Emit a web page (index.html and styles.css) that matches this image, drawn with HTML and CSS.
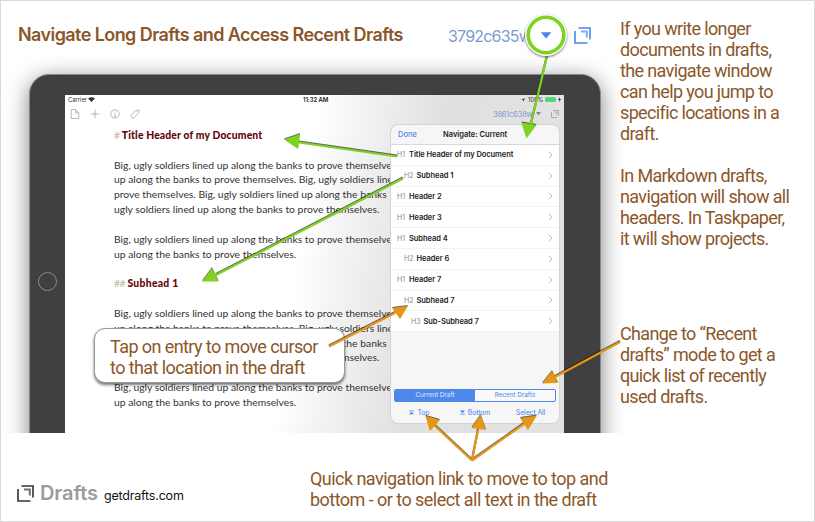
FILE: index.html
```html
<!DOCTYPE html>
<html lang="en">
<head>
<meta charset="utf-8">
<title>Navigate Long Drafts</title>
<link rel="stylesheet" href="styles.css">
</head>
<body>
<div class="poster">
  <main class="main">
    <header class="top">
      <h1 class="title">Navigate Long Drafts and Access Recent Drafts</h1>
      <div class="count">3792c635w</div>
      <svg class="ring" viewBox="0 0 42 42"><circle cx="21" cy="21" r="17.8" fill="none" stroke="#7ed321" stroke-width="3.6"/><path d="M15.700 18.300H26.500L21.100 24.500Z" fill="#4a86ee"/></svg>
      <svg class="logo logo-blue" viewBox="0 0 17 17"><path d="M4.500 1H16V12.500M1 4V16H13.500"/><path class="inner" d="M7 4.500H12.800V10.500"/></svg>
    </header>
    <div class="stage">
      <div class="tablet">
        <div class="bezel"><span class="home"></span></div>
        <div class="screen">
          <div class="status">
            <span class="carrier">Carrier</span>
            <svg class="wifi" viewBox="0 0 7 5"><path d="M0 1.600Q3.500-1.300 7 1.600L3.500 5Z" fill="#333"/></svg>
            <span class="clock">11:32 AM</span>
            <svg class="loc" viewBox="0 0 5 5"><path d="M5 0L2.800 5 2.500 2.600 0 2.200Z" fill="#444"/></svg>
            <span class="pct">100%</span>
            <span class="battery"></span>
            <svg class="bolt" viewBox="0 0 3 5"><path d="M2 0L0 3H1.400L1 5 3 2H1.600Z" fill="#222"/></svg>
          </div>
          <div class="tools">
            <svg class="tool" viewBox="0 0 10 10"><path d="M1.200.5H5.500L8.800 3.800V9.500H1.200ZM5.500.5V3.800H8.800"/></svg>
            <svg class="tool" viewBox="0 0 10 10"><path d="M5 .8V9.200M.8 5H9.200"/></svg>
            <svg class="tool" viewBox="0 0 10 10"><circle cx="5" cy="5" r="4.200"/><path d="M5 4.300V7.500M5 2.500V3.300M4.200 7.500H5.800"/></svg>
            <svg class="tool" viewBox="0 0 10 10"><path d="M1.100 6.200L5.800 1.300 8.800.9 8.900 3.700 4 8.800Q2.700 9.600 1.600 8.600 .5 7.400 1.100 6.200ZM6.700 2.800L7.300 2.200"/></svg>
            <span class="tool-count">3861c638w</span>
            <svg class="caret" viewBox="0 0 5 4"><path d="M0 0H5L2.500 3.500Z" fill="#888"/></svg>
            <svg class="logo logo-small" viewBox="0 0 17 17"><path d="M4.500 1H16V12.500M1 4V16H13.500M7 4.500H12.500V10"/></svg>
          </div>
          <article class="doc">
            <h2><i># </i><b class="h-title">Title Header of my Document</b></h2>
            <p>Big, ugly soldiers lined up along the banks to prove themselves<br>up along the banks to prove themselves. Big, ugly soldiers lined<br>prove themselves. Big, ugly soldiers lined up along the banks<br>ugly soldiers lined up along the banks to prove themselves.</p>
            <p>Big, ugly soldiers lined up along the banks to prove themselves<br>up along the banks to prove themselves.</p>
            <h2><i>## </i><b class="h-sub">Subhead 1</b></h2>
            <p>Big, ugly soldiers lined up along the banks to prove themselves<br>up along the banks to prove themselves. Big, ugly soldiers lined<br>prove themselves. Big, ugly soldiers lined up along the banks<br>ugly soldiers lined up along the banks to prove themselves.</p>
            <p>Big, ugly soldiers lined up along the banks to prove themselves<br>up along the banks to prove themselves.</p>
          </article>
          <section class="popover">
            <div class="pop-head"><span class="done">Done</span><b>Navigate: Current</b></div>
            <ul class="list">
              <li><i>H1</i><b>Title Header of my Document</b><svg class="chev" viewBox="0 0 5 8"><path d="M1 .8L4 4 1 7.200"/></svg></li>
              <li class="in1"><i>H2</i><b>Subhead 1</b><svg class="chev" viewBox="0 0 5 8"><path d="M1 .8L4 4 1 7.200"/></svg></li>
              <li><i>H1</i><b>Header 2</b><svg class="chev" viewBox="0 0 5 8"><path d="M1 .8L4 4 1 7.200"/></svg></li>
              <li><i>H1</i><b>Header 3</b><svg class="chev" viewBox="0 0 5 8"><path d="M1 .8L4 4 1 7.200"/></svg></li>
              <li><i>H1</i><b>Subhead 4</b><svg class="chev" viewBox="0 0 5 8"><path d="M1 .8L4 4 1 7.200"/></svg></li>
              <li class="in1"><i>H2</i><b>Header 6</b><svg class="chev" viewBox="0 0 5 8"><path d="M1 .8L4 4 1 7.200"/></svg></li>
              <li><i>H1</i><b>Header 7</b><svg class="chev" viewBox="0 0 5 8"><path d="M1 .8L4 4 1 7.200"/></svg></li>
              <li class="in1"><i>H2</i><b>Subhead 7</b><svg class="chev" viewBox="0 0 5 8"><path d="M1 .8L4 4 1 7.200"/></svg></li>
              <li class="in2"><i>H3</i><b>Sub-Subhead 7</b><svg class="chev" viewBox="0 0 5 8"><path d="M1 .8L4 4 1 7.200"/></svg></li>
            </ul>
            <div class="segment"><span class="on">Current Draft</span><span>Recent Drafts</span></div>
            <div class="jumps">
              <span><svg class="jump" viewBox="0 0 6 5"><path d="M0 0H6V1H0ZM3 1.500L6 4.600H0Z"/></svg>Top</span>
              <span><svg class="jump" viewBox="0 0 6 5"><path d="M0 4H6V5H0ZM0 0H6L3 3.300Z"/></svg>Bottom</span>
              <span>Select All</span>
            </div>
          </section>
        </div>
      </div>
    </div>
    <footer class="foot">
      <div class="brand">
        <svg class="logo logo-dark" viewBox="0 0 17 17"><path d="M4.500 1H16V12.500M1 4V16H13.500"/><path class="inner" d="M7 4.500H12.800V10.500"/></svg>
        <span class="name">Drafts</span><span class="site">getdrafts.com</span>
      </div>
      <p class="note quick">Quick navigation link to move to top and<br>bottom - or to select all text in the draft</p>
    </footer>
  </main>
  <aside class="side">
    <p class="note">If you write longer<br>documents in drafts,<br>the navigate window<br>can help you jump to<br>specific locations in a<br>draft.</p>
    <p class="note">In Markdown drafts,<br>navigation will show all<br>headers. In Taskpaper,<br>it will show projects.</p>
    <p class="note recent">Change to “Recent<br>drafts” mode to get a<br>quick list of recently<br>used drafts.</p>
  </aside>
  <div class="callout note">Tap on entry to move cursor<br>to that location in the draft</div>
  <svg class="arrows" viewBox="0 0 815 522">
    <g class="green">
      <path class="shaft" d="M547.500 54L531 124M397 156.500L299 142.500M403 178.500L216 275"/>
      <path d="M526.500 138.500L521.500 122.500L536.500 125ZM284 139.500L300 134L298 149ZM202 281.500L212 268L218.500 281.500Z"/>
    </g>
    <g class="orange">
      <path class="shaft" d="M329 346.500L395 313M620 342L555 377M472 460.500L435 426M472 460.500L478 430M472 460.500L524 424"/>
      <path d="M408 306L392 308L400 319ZM542 383.500L552 371L558 383ZM425.500 416L440 420L430 431ZM480.500 415L471.500 428L486 430ZM537 415.500L520 418L528 430Z"/>
    </g>
  </svg>
</div>
</body>
</html>
```
FILE: styles.css
```css
* { box-sizing: border-box; }
body { margin: 0; background: #fff; font-family: Inter, "Liberation Sans", sans-serif; }
h1, h2, p, ul { margin: 0; padding: 0; font-weight: 400; }
i { font-style: normal; }
svg { display: block; flex: none; overflow: visible; }

.poster { position: relative; width: 815px; height: 522px; overflow: hidden; display: flex; border: 1px solid #d9d9d9; }
.main { width: 619px; flex: none; display: flex; flex-direction: column; }
.top { position: relative; z-index: 1; flex: none; height: 68px; padding-left: 17px; display: flex; align-items: center; white-space: nowrap; }
.title { width: 430px; margin-top: -2px; font-size: 18px; font-weight: 600; letter-spacing: -.58px; color: #8b572a; }
.count { width: 77px; margin-top: 2px; font-size: 16px; letter-spacing: -.8px; color: #7e9bce; }
.ring { width: 42px; height: 42px; border-radius: 50%; background: #fff; filter: drop-shadow(0 1px 1px rgba(0,0,0,.55)); }
.logo { fill: none; stroke-width: 1.6; stroke: #4a86ee; }
.inner { stroke-width: 2; opacity: .7; }
.logo-blue { width: 17px; height: 17px; margin-left: 7px; }

.stage { width: 813px; height: 414px; margin-top: -50px; padding: 55px 0 0 28px; overflow: hidden; flex: none; }
.tablet { display: flex; width: 572px; height: 420px; padding: 20px 0 0; border-radius: 20px 20px 0 0; background: #404040; border: 1px solid #888; box-shadow: 0 5px 22px rgba(0,0,0,.5); }
.bezel { width: 35px; padding-top: 177px; flex: none; }
.home { display: block; width: 19px; height: 19px; margin-left: 8px; border: 1px solid #8b8b8b; border-radius: 50%; }
.screen { position: relative; width: 499px; flex: none; background: linear-gradient(98deg, #fff 46%, #f3f3f3 54%, #e0e0e0 69%, #e3e3e3 100%); }

.status { display: flex; align-items: center; height: 8px; padding: 1px 3px 0; font-size: 6px; color: #333; white-space: nowrap; }
.wifi { width: 7px; height: 5px; margin-left: 2px; }
.carrier { width: 18px; letter-spacing: -.1px; }
.clock { margin-left: 208px; width: 220px; font-weight: 600; letter-spacing: -.1px; color: #222; }
.loc { width: 4px; height: 4px; }
.pct { width: 14px; margin: 0 3px 0 3px; letter-spacing: -.2px; }
.battery { width: 11px; height: 5px; background: #4cd964; border: .5px solid #6c9; border-radius: 1px; }
.bolt { width: 3px; height: 5px; margin-left: 2px; }
.tools { display: flex; align-items: center; height: 22px; padding-left: 5px; gap: 10px; color: #7e9bce; font-size: 7.500px; }
.tool { width: 10px; height: 10px; fill: none; stroke: #999; stroke-width: .7; }
.tool-count { margin-left: 343px; width: 33px; letter-spacing: -.2px; }
.caret { width: 5px; height: 4px; }
.logo-small { width: 8px; height: 8px; stroke: #999; }

.doc { padding: 3px 0 0 49px; width: 325px; overflow: hidden; white-space: nowrap; font-family: Lato, "Liberation Sans", sans-serif; font-size: 10.350px; line-height: 14.830px; color: #333; }
.doc h2, .doc p { font-size: 10.350px; margin-bottom: 14.830px; }
.doc h2 i { color: #b9b5a6; letter-spacing: -.4px; }
.doc b { color: #5f0508; font-weight: 900; }
.h-title { letter-spacing: .15px; }
.h-sub { letter-spacing: .3px; }

.popover { position: absolute; left: 326px; top: 30px; width: 168px; height: 298px; border-radius: 7px; overflow: hidden; background: #f6f6f6; box-shadow: 0 0 0 1px #d4d4d4; font-size: 7.500px; color: #1c1c1c; white-space: nowrap; }
.pop-head { display: flex; align-items: center; height: 20px; padding-left: 7px; border-bottom: 1px solid #d8d8d8; }
.pop-head b { font-weight: 600; }
.done { width: 45px; color: #4a86ee; font-weight: 500; }
.list { list-style: none; background: #fff; }
.list li { display: flex; align-items: center; height: 20.800px; padding: 0 3px 0 6px; border-bottom: 1px solid #f3f3f3; }
.list .in1 { padding-left: 13px; }
.list .in2 { padding-left: 20px; }
.list i { width: 12px; font-size: 7px; color: #888; }
.list .in1 i, .list .in2 i { width: 12.500px; }
.list b { font-weight: 600; letter-spacing: -.06px; }
.chev { width: 5px; height: 8px; margin: 0 3px 0 auto; fill: none; stroke: #bbb; stroke-width: 1; }
.segment { display: flex; width: 162px; height: 13px; margin: 57px 0 0 3px; border: 1px solid #4a86ee; border-radius: 2px; font-size: 6.500px; letter-spacing: -.08px; color: #4a86ee; background: #fafafa; }
.segment span { flex: 1; text-align: center; line-height: 11px; }
.segment .on { color: #dce8ff; background: #4f88ec; }
.jumps { display: flex; margin-top: 5px; height: 10px; align-items: center; color: #4a86ee; font-size: 7px; letter-spacing: -.15px; }
.jumps span { width: 54px; display: flex; align-items: center; justify-content: center; gap: 3px; margin-left: 1.500px; }
.jump { width: 5px; height: 5px; fill: #4a86ee; }

.foot { display: flex; height: 88px; }
.brand { display: flex; flex: none; width: 310px; height: 26px; margin: 48px 0 0 16px; align-items: baseline; white-space: nowrap; }
.logo-dark { width: 17px; height: 17px; stroke: #333; align-self: flex-start; margin-top: 4px; }
.name { margin-left: 6px; font-size: 20px; font-weight: 600; letter-spacing: -.1px; color: #9b9b9b; }
.site { margin-left: 6px; font-size: 12.500px; letter-spacing: -.2px; color: #111; }
.note { font-family: Roboto, Inter, sans-serif; font-size: 18px; line-height: 21px; letter-spacing: -.64px; color: #8b572a; white-space: nowrap; }
.quick { flex: none; margin: 35px 0 0 -17px; letter-spacing: -.54px; }
.side { position: relative; padding-top: 17px; }
.side .note { margin-bottom: 21px; }
.side .recent { margin-top: 74px; }

.callout { position: absolute; left: 93px; top: 327px; width: 251px; height: 55px; padding: 7px 0 0 15px; background: #fff; border: 1px solid #999; border-radius: 11px; box-shadow: 0 2px 3px rgba(0,0,0,.55); letter-spacing: -.58px; }
.arrows { position: absolute; left: -1px; top: -1px; width: 815px; height: 522px; }
.arrows g { filter: drop-shadow(0 -.5px .6px rgba(0,0,0,.6)); }
.shaft { fill: none; stroke-width: 2.200; }
.green { fill: #7ed321; stroke: none; }
.green .shaft { fill: none; stroke: #7ed321; }
.orange { fill: #e69615; }
.orange .shaft { fill: none; stroke: #e69615; }
```
